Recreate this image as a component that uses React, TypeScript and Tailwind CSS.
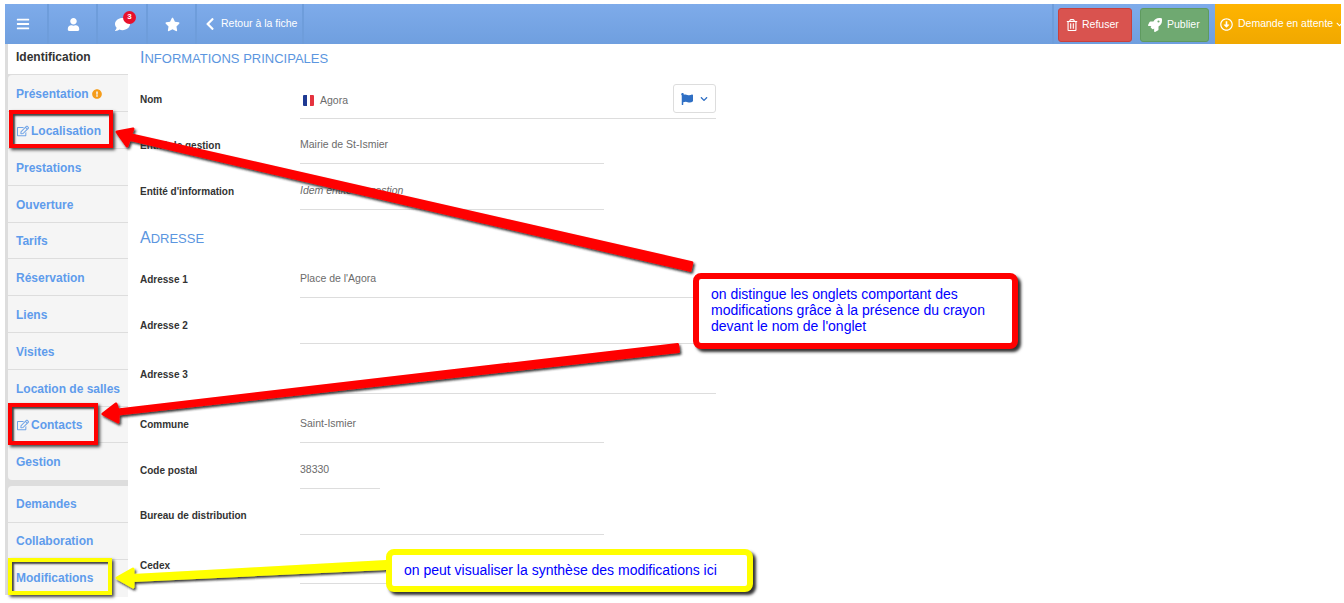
import { FaBars, FaUser, FaComment, FaStar, FaChevronLeft, FaChevronDown, FaRegTrashAlt, FaRocket, FaRegArrowAltCircleDown, FaRegEdit, FaFlag, FaExclamationCircle } from "react-icons/fa";

const F = "font-['Liberation_Sans',Arial,sans-serif]";

function Tab({ label, active, pencil, badge, cls = "h-[37px] pt-[2px]", last }: { label: string; active?: boolean; pencil?: boolean; badge?: boolean; cls?: string; last?: boolean }) {
  return (
    <div className={`${cls} flex items-center pl-2 text-[12px] font-bold ${active ? "bg-white text-[#333]" : "bg-[#f5f5f5] text-[#5f9cec]"} ${last ? "" : "border-b border-[#dddddd]"}`}>
      {pencil && <FaRegEdit size={12} className="mr-[2px] ml-[1px] text-[#6fa3e6]" />}
      <span>{label}</span>
      {badge && <FaExclamationCircle size={10} className="ml-[3px] text-[#f59c1a]" />}
    </div>
  );
}

function Row({ label, value, line, h, lp, vp, italic, flag, action }: { label: string; value?: string; line: string; h: string; lp: string; vp: string; italic?: boolean; flag?: boolean; action?: boolean }) {
  return (
    <div className={`flex ${h}`}>
      <div className={`w-[160px] shrink-0 ${lp} text-[10px] font-bold leading-[14px] text-[#333]`}>{label}</div>
      <div className={`${line} ${vp} relative border-b border-[#dddddd] text-[10.5px] leading-[14px] text-[#6b6b6b] ${italic ? "italic" : ""}`}>
        {flag && (
          <span className="ml-[3px] mr-[6px] inline-flex h-[11px] w-[11px] translate-y-[2px] overflow-hidden rounded-[1px]">
            <span className="w-1/3 bg-[#1f3a93]" />
            <span className="w-1/3 bg-white" />
            <span className="w-1/3 bg-[#e5333f]" />
          </span>
        )}
        {value}
        {action && (
          <span className="absolute right-0 top-[13px] flex h-[29px] w-[43px] items-center justify-center gap-[7px] rounded-[3px] border border-[#dddddd] bg-white text-[#2f6fc4]">
            <FaFlag size={12} />
            <FaChevronDown size={8} />
          </span>
        )}
      </div>
    </div>
  );
}

function NavCell({ w, cls = "", children }: { w: string; cls?: string; children: React.ReactNode }) {
  return <div className={`${w} ${cls} flex h-full shrink-0 items-center justify-center border-r-2 border-[#6e9ddb] text-white`}>{children}</div>;
}

function Callout({ cls, border, children }: { cls: string; border: string; children: React.ReactNode }) {
  return (
    <div className={`absolute ${cls} ${border} rounded-[8px] border-[6px] bg-white text-[14px] leading-[16px] text-[#0000ff] shadow-[3px_3px_3px_#333]`}>
      {children}
    </div>
  );
}

function Frame({ cls, color }: { cls: string; color: string }) {
  return <div className={`absolute ${cls} ${color} border-[4px] shadow-[inset_2px_2px_2px_#444,2px_2px_3px_#444]`} />;
}

export default function App() {
  return (
    <div className={`${F} relative h-[603px] w-[1344px] overflow-hidden bg-white pl-[5px] pt-[4px]`}>
      <header className="flex h-[40px] w-[1336px] bg-gradient-to-b from-[#7eabea] to-[#6f9fdf] text-white">
        <NavCell w="w-[44px]" cls="pr-[7px]"><FaBars size={14} /></NavCell>
        <NavCell w="w-[49px]" cls="pl-[2px]"><FaUser size={13} /></NavCell>
        <NavCell w="w-[50px]" cls="pl-[1px]">
          <span className="relative">
            <FaComment size={15} />
            <span className="absolute -right-[6px] -top-[6px] flex h-[13px] w-[13px] items-center justify-center rounded-full bg-[#e8102a] text-[8px] font-bold leading-none">3</span>
          </span>
        </NavCell>
        <NavCell w="w-[49px]" cls="pl-[2px]"><FaStar size={15} /></NavCell>
        <div className="flex h-full w-[107px] shrink-0 items-center gap-[4px] whitespace-nowrap border-r-2 border-[#6e9ddb] pl-[6px] text-[10.5px]">
          <FaChevronLeft size={14} />
          <span>Retour à la fiche</span>
        </div>
        <div className="flex-1" />
        <div className="flex h-full shrink-0 items-center border-l-2 border-[#6e9ddb] pl-[4px]">
          <div className="mt-[2px] flex h-[34px] w-[74px] items-center gap-[4px] rounded-[3px] border border-[#c9403c] bg-[#d9534f] pl-[7px] text-[10.5px]">
            <FaRegTrashAlt size={12} />
            Refuser
          </div>
          <div className="ml-[8px] mt-[2px] flex h-[34px] w-[69px] items-center gap-[5px] rounded-[3px] border border-[#5f9a5f] bg-[#6fa971] pl-[7px] text-[10.5px]">
            <FaRocket size={14} />
            Publier
          </div>
        </div>
        <div className="ml-[6px] flex h-full w-[126px] shrink-0 items-center gap-[5px] overflow-hidden whitespace-nowrap bg-gradient-to-b from-[#ffb400] to-[#f0a800] pl-[5px] text-[10.5px]">
          <FaRegArrowAltCircleDown size={13} className="shrink-0" />
          <span>Demande en attente</span>
          <FaChevronDown size={7} className="-ml-[2px] shrink-0" />
        </div>
      </header>

      <div className="flex">
        <aside className="h-[551px] w-[123px] shrink-0 border-l-[3px] border-[#dddddd] bg-[#dddddd]">
          <Tab label="Identification" active cls="h-[31px] pb-[4px]" />
          <Tab label="Présentation" badge cls="h-[37px] pt-[2px] rounded-tl-[4px]" />
          <Tab label="Localisation" pencil />
          <Tab label="Prestations" />
          <Tab label="Ouverture" />
          <Tab label="Tarifs" cls="h-[36px]" />
          <Tab label="Réservation" />
          <Tab label="Liens" />
          <Tab label="Visites" />
          <Tab label="Location de salles" />
          <Tab label="Contacts" pencil cls="h-[36px]" />
          <Tab label="Gestion" last cls="h-[37px] rounded-bl-[4px]" />
          <div className="h-[6px]" />
          <Tab label="Demandes" cls="h-[37px] rounded-tl-[4px]" />
          <Tab label="Collaboration" cls="h-[37px]" />
          <Tab label="Modifications" last cls="h-[37px] pb-[2px]" />
        </aside>

        <main className="flex-1 pl-[12px]">
          <h2 className="h-[27px] pt-[5px] text-[13px] uppercase leading-[18px] text-[#5b96e0] first-letter:text-[16px]">Informations principales</h2>
          <Row label="Nom" value="Agora" line="w-[416px]" h="h-[48px]" lp="pt-[22px]" vp="pt-[22px]" flag action />
          <Row label="Entité de gestion" value="Mairie de St-Ismier" line="w-[304px]" h="h-[45px]" lp="pt-[20px]" vp="pt-[18px]" />
          <Row label="Entité d'information" value="Idem entité de gestion" line="w-[304px]" h="h-[46px]" lp="pt-[21px]" vp="pt-[19px]" italic />
          <h2 className="h-[42px] pt-[19px] text-[13px] uppercase leading-[18px] text-[#5b96e0] first-letter:text-[16px]">Adresse</h2>
          <Row label="Adresse 1" value="Place de l'Agora" line="w-[416px]" h="h-[46px]" lp="pt-[21px]" vp="pt-[19px]" />
          <Row label="Adresse 2" line="w-[416px]" h="h-[46px]" lp="pt-[21px]" vp="pt-[19px]" />
          <Row label="Adresse 3" line="w-[416px]" h="h-[50px]" lp="pt-[24px]" vp="pt-[22px]" />
          <Row label="Commune" value="Saint-Ismier" line="w-[304px]" h="h-[49px]" lp="pt-[24px]" vp="pt-[22px]" />
          <Row label="Code postal" value="38330" line="w-[80px]" h="h-[46px]" lp="pt-[21px]" vp="pt-[19px]" />
          <Row label="Bureau de distribution" line="w-[304px]" h="h-[46px]" lp="pt-[20px]" vp="pt-[18px]" />
          <Row label="Cedex" line="w-[304px]" h="h-[49px]" lp="pt-[24px]" vp="pt-[22px]" />
        </main>
      </div>

      <Frame cls="left-[9px] top-[110px] h-[38px] w-[104px]" color="border-[#ff0000]" />
      <Frame cls="left-[8px] top-[403px] h-[42px] w-[90px]" color="border-[#ff0000]" />
      <Frame cls="left-[8px] top-[558px] h-[37px] w-[104px]" color="border-[#ffff00]" />

      <svg className="pointer-events-none absolute left-0 top-0" width="1344" height="603" viewBox="0 0 1344 603">
        <defs>
          <filter id="s" x="-5%" y="-20%" width="110%" height="140%">
            <feDropShadow dx="1.5" dy="2" stdDeviation="1.2" floodColor="#222" floodOpacity="0.9" />
          </filter>
        </defs>
        <polygon filter="url(#s)" fill="#ff0000" stroke="#ff0000" strokeWidth="3" strokeLinejoin="round" points="691.9,262.6 130.6,134.6 133,129 117,132 127,146 129.4,139.4 690.1,270.4" />
        <polygon filter="url(#s)" fill="#ff0000" stroke="#ff0000" strokeWidth="3" strokeLinejoin="round" points="677.5,344.5 117.7,410 116,404 103,414 118,422 118.3,414 678.5,351.5" />
        <polygon filter="url(#s)" fill="#ffff00" stroke="#ffff00" strokeWidth="3" strokeLinejoin="round" points="386,561.5 133,575.5 133,569 117,578 133,587 133,580.5 386,568.5" />
      </svg>

      <Callout cls="left-[693px] top-[273px] h-[76px] w-[325px] pl-[12px] pt-[7px]" border="border-[#ff0000]">
        on distingue les onglets comportant des<br />modifications grâce à la présence du crayon<br />devant le nom de l'onglet
      </Callout>
      <Callout cls="left-[386px] top-[549px] h-[43px] w-[367px] pl-[12px] pt-[7px]" border="border-[#ffff00]">
        on peut visualiser la synthèse des modifications ici
      </Callout>
    </div>
  );
}
